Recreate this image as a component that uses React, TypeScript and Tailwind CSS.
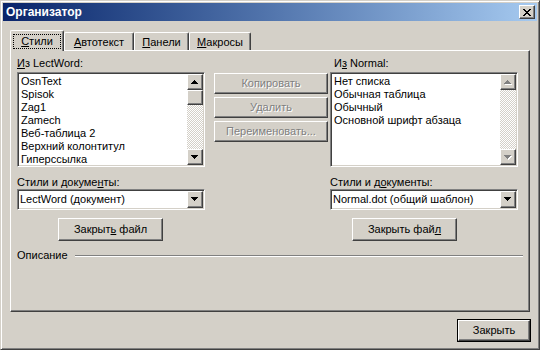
import React from "react";

const raised =
  "border border-t-white border-l-white border-r-[#404040] border-b-[#404040] shadow-[inset_-1px_-1px_#808080]";
const sunken =
  "border border-t-[#808080] border-l-[#808080] border-r-white border-b-white shadow-[inset_1px_1px_#404040,inset_-1px_-1px_#d4d0c8]";

const leftStyles = ["OsnText", "Spisok", "Zag1", "Zamech", "Веб-таблица 2", "Верхний колонтитул", "Гиперссылка"];
const rightStyles = ["Нет списка", "Обычная таблица", "Обычный", "Основной шрифт абзаца"];

const Arrow = ({ dir, disabled }: { dir: "up" | "down"; disabled?: boolean }) => {
  const rows = dir === "up" ? [0, 1, 2, 3] : [3, 2, 1, 0];
  const shape = (fill: string, dx: number, dy: number) =>
    rows.map((r, i) => <rect key={fill + i} x={3 - r + dx} y={i + dy} width={r * 2 + 1} height={1} fill={fill} />);
  return (
    <svg width="8" height="5" shapeRendering="crispEdges">
      {disabled && shape("#ffffff", 1, 1)}
      {shape(disabled ? "#808080" : "#000000", 0, 0)}
    </svg>
  );
};

const Scrollbar = ({ disabled }: { disabled?: boolean }) => (
  <div className="w-[16px] my-px mr-px flex flex-col">
    <div className={`h-[16px] shrink-0 flex items-center justify-center bg-[#d4d0c8] ${raised}`}>
      <Arrow dir="up" disabled={disabled} />
    </div>
    {!disabled && <div className={`h-[15px] shrink-0 bg-[#d4d0c8] ${raised}`} />}
    <div className="flex-1 bg-[repeating-conic-gradient(#d4d0c8_0_25%,#ffffff_0_50%)] bg-[length:2px_2px]" />
    <div className={`h-[16px] shrink-0 flex items-center justify-center bg-[#d4d0c8] ${raised}`}>
      <Arrow dir="down" disabled={disabled} />
    </div>
  </div>
);

const ListBox = ({ items, disabled }: { items: string[]; disabled?: boolean }) => (
  <div className={`flex h-[95px] bg-white ${sunken}`}>
    <div className="flex-1 pl-[3px] pt-[2px] overflow-hidden text-black">
      {items.map((it) => (
        <div key={it} className="h-[13px] leading-[13px] whitespace-nowrap">
          {it}
        </div>
      ))}
    </div>
    <Scrollbar disabled={disabled} />
  </div>
);

const Combo = ({ value }: { value: string }) => (
  <div className={`flex h-[21px] bg-white ${sunken}`}>
    <div className="flex-1 pl-[2px] flex items-center text-black whitespace-nowrap">{value}</div>
    <div className={`w-[16px] my-px mr-px flex items-center justify-center bg-[#d4d0c8] ${raised}`}>
      <Arrow dir="down" />
    </div>
  </div>
);

const Button = ({ children, disabled, className = "" }: { children: React.ReactNode; disabled?: boolean; className?: string }) => (
  <div
    className={`flex items-center justify-center bg-[#d4d0c8] ${raised} ${
      disabled ? "text-[#808080] [text-shadow:1px_1px_0_#fff]" : "text-black"
    } ${className}`}
  >
    {children}
  </div>
);

const U = ({ children }: { children: React.ReactNode }) => (
  <span className="underline underline-offset-[1px]">{children}</span>
);

export default function App() {
  return (
    <div className="w-[540px] h-[350px] bg-[#d4d0c8] font-['Liberation_Sans',Arial,sans-serif] text-[11px] text-black border border-t-[#d4d0c8] border-l-[#d4d0c8] border-r-[#404040] border-b-[#404040] shadow-[inset_1px_1px_#fff,inset_-1px_-1px_#808080] p-[2px] flex flex-col">
      {/* title bar */}
      <div className="h-[18px] shrink-0 flex items-center justify-between pl-[3px] pr-[2px] bg-linear-to-r from-[#0a246a] to-[#a6caf0]">
        <span className="text-white font-bold text-[12px]">Организатор</span>
        <div className={`w-[16px] h-[14px] flex items-center justify-center bg-[#d4d0c8] ${raised}`}>
          <svg width="8" height="7" shapeRendering="crispEdges">
            {[0, 1, 2, 3, 4, 5, 6].map((i) => (
              <React.Fragment key={i}>
                <rect x={i} y={i} width={2} height={1} fill="#000" />
                <rect x={6 - i} y={i} width={2} height={1} fill="#000" />
              </React.Fragment>
            ))}
          </svg>
        </div>
      </div>

      <div className="flex-1 px-[7px] flex flex-col">
        {/* tabs */}
        <div className="flex items-end h-[20px] mt-[9px]">
          <div className="relative z-10 -mb-px h-[21px] w-[54px] bg-[#d4d0c8] border-t border-l border-r border-t-white border-l-white border-r-[#404040] shadow-[inset_-1px_0_#808080] rounded-t-[2px] flex items-center justify-center pt-[1px]">
            <span className="border border-dotted border-black px-[7px] leading-[13px]">
              <U>С</U>тили
            </span>
          </div>
          <div className="h-[18px] w-[70px] border-t border-l border-r border-t-white border-l-white border-r-[#404040] shadow-[inset_-1px_0_#808080] rounded-t-[2px] flex items-center justify-center pt-[2px]">
            <span>
              <U>А</U>втотекст
            </span>
          </div>
          <div className="h-[18px] w-[55px] border-t border-l border-r border-t-white border-l-white border-r-[#404040] shadow-[inset_-1px_0_#808080] rounded-t-[2px] flex items-center justify-center pt-[2px]">
            <span>
              <U>П</U>анели
            </span>
          </div>
          <div className="h-[18px] w-[62px] border-t border-l border-r border-t-white border-l-white border-r-[#404040] shadow-[inset_-1px_0_#808080] rounded-t-[2px] flex items-center justify-center pt-[2px]">
            <span>
              <U>М</U>акросы
            </span>
          </div>
        </div>

        {/* tab panel */}
        <div className={`h-[262px] w-[520px] pl-[6px] pr-[11px] pt-[6px] flex flex-col ${raised}`}>
          <div className="flex">
            <div className="w-[188px] flex flex-col">
              <div className="h-[13px] leading-[13px] mb-[2px]">
                <U>И</U>з LectWord:
              </div>
              <ListBox items={leftStyles} />
              <div className="h-[13px] leading-[13px] mt-[9px]">
                Стили и докуме<U>н</U>ты:
              </div>
              <Combo value="LectWord (документ)" />
              <Button className="mt-[8px] ml-[41px] w-[105px] h-[23px]">
                <span>
                  Закрыт<U>ь</U> файл
                </span>
              </Button>
            </div>

            <div className="w-[114px] ml-[9px] mt-[16px] flex flex-col gap-[3px]">
              <Button disabled className="h-[21px]">
                Копировать
              </Button>
              <Button disabled className="h-[21px]">
                Удалить
              </Button>
              <Button disabled className="h-[21px]">
                Переименовать...
              </Button>
            </div>

            <div className="w-[188px] ml-[2px] flex flex-col">
              <div className="h-[13px] leading-[13px] mb-[2px] pl-[4px]">
                И<U>з</U> Normal:
              </div>
              <ListBox items={rightStyles} disabled />
              <div className="h-[13px] leading-[13px] mt-[9px]">
                Стили и д<U>о</U>кументы:
              </div>
              <Combo value="Normal.dot (общий шаблон)" />
              <Button className="mt-[8px] ml-[22px] w-[105px] h-[23px]">
                <span>
                  Закрыть фай<U>л</U>
                </span>
              </Button>
            </div>
          </div>

          <div className="flex items-center h-[13px] mt-[8px] -mr-[5px]">
            <span className="leading-[13px]">Описание</span>
            <div className="flex-1 ml-[7px] h-[2px] border-t border-t-[#808080] border-b border-b-white" />
          </div>
        </div>

        {/* footer */}
        <div className="flex justify-end mt-[7px] -mr-px">
          <div className="border border-black">
            <Button className="w-[72px] h-[21px]">Закрыть</Button>
          </div>
        </div>
      </div>
    </div>
  );
}
